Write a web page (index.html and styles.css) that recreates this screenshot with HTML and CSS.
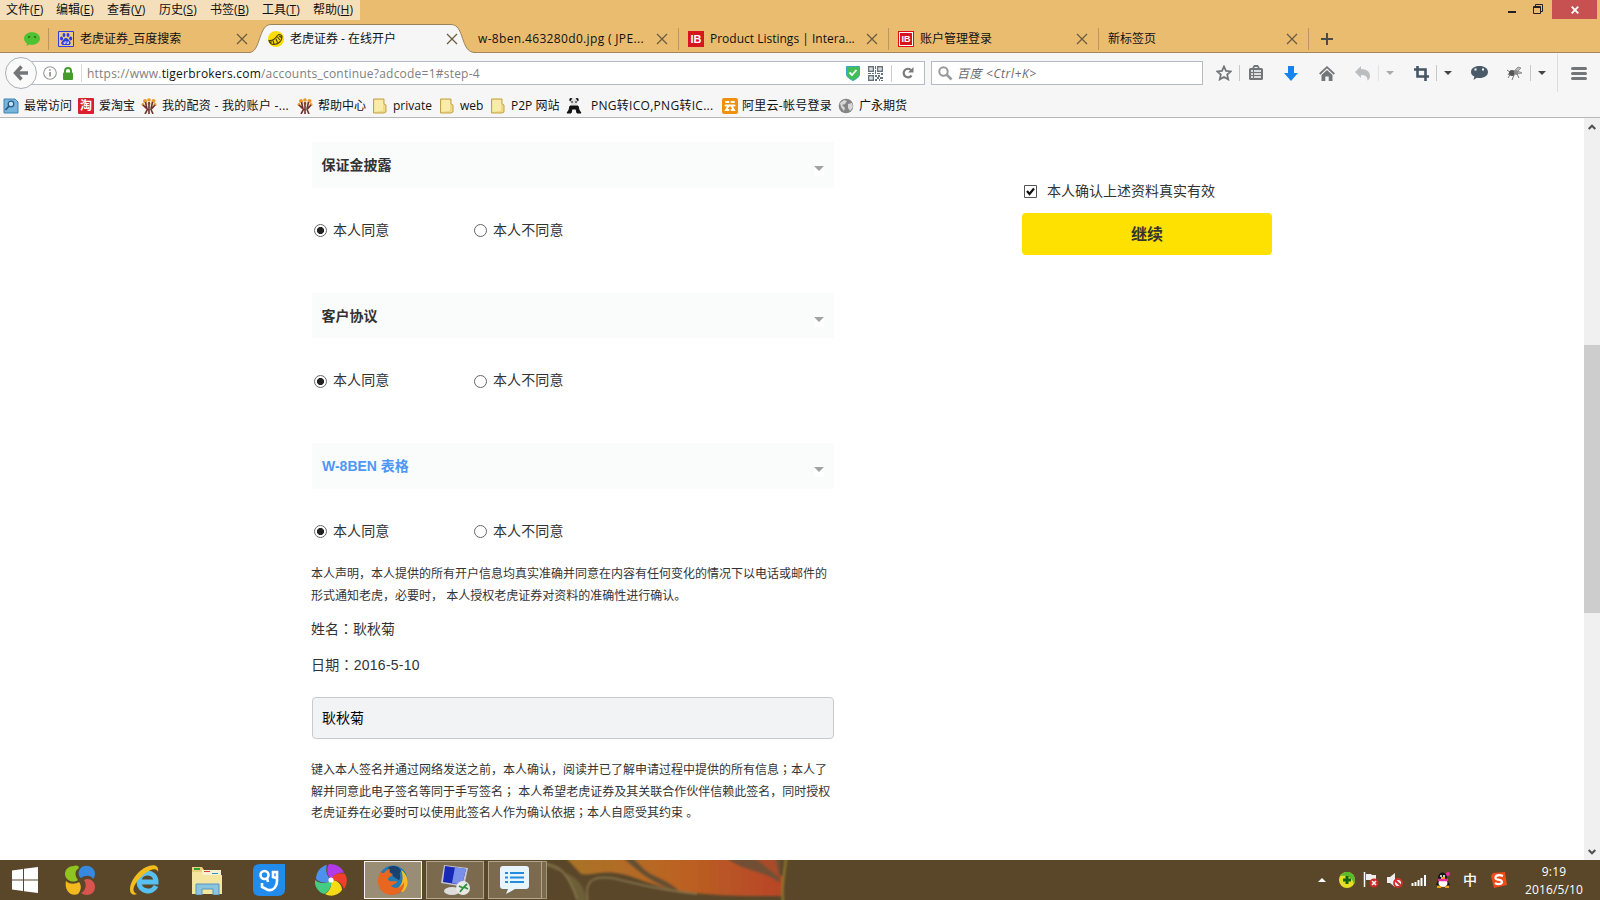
FILE: index.html
```html
<!DOCTYPE html>
<html lang="zh-CN">
<head>
<meta charset="utf-8">
<title>老虎证券 - 在线开户</title>
<link rel="stylesheet" href="styles.css">
</head>
<body>
<svg class="defs" width="0" height="0">
  <symbol id="x" viewBox="0 0 12 12"><path d="M1 1l10 10M11 1L1 11" stroke="#6b5c42" stroke-width="1.3" fill="none"/></symbol>
  <symbol id="folder" viewBox="0 0 16 16"><path d="M1.500 1h10.500v5l2 1v7l-2 1H1.500z" fill="#efd984" stroke="#c3a349"/><path d="M2.500 2H11v10.500L2.500 14z" fill="#f9eca9"/></symbol>
  <symbol id="tree" viewBox="0 0 16 16"><g fill="#e89a2c"><circle cx="4" cy="3" r="2"/><circle cx="8" cy="2" r="1.800"/><circle cx="12.500" cy="3" r="2"/><circle cx="2" cy="6.500" r="1.500"/><circle cx="14" cy="6.500" r="1.500"/><circle cx="8" cy="5.500" r="1.500"/></g><path d="M4 16l2.500-4.500L2 7M6 11L4.500 4M12 16l-2-4.500L14 7M10 11l1.500-7M8 4v12" stroke="#71302a" stroke-width="1.600" fill="none"/></symbol>
  <symbol id="caret" viewBox="0 0 8 4"><path d="M0 0h8L4 4z" fill="currentColor"/></symbol>
</svg>

<div class="window">
  <header class="titlebar">
    <nav class="menu">
      <span>文件(<u>F</u>)</span><span>编辑(<u>E</u>)</span><span>查看(<u>V</u>)</span><span>历史(<u>S</u>)</span><span>书签(<u>B</u>)</span><span>工具(<u>T</u>)</span><span>帮助(<u>H</u>)</span>
    </nav>
    <div class="controls">
      <svg class="min" width="8" height="2"><path d="M0 0h8v2H0z" fill="#222"/></svg>
      <svg class="restore" width="10" height="10" fill="none" stroke="#222"><path d="M2.500 2V.500h7v7H8"/><path d="M.500 2.500h7v7h-7zM0 3.500h8"/></svg>
      <span class="close"><svg width="8" height="8"><path d="M.700.700l6.600 6.600M7.300.700L.700 7.300" stroke="#fff" stroke-width="1.800"/></svg></span>
    </div>
  </header>

  <div class="tabs">
    <div class="pinned"><svg width="16" height="16" viewBox="0 0 16 16"><path d="M8 1.200c4.500 0 8 2.700 8 6.300s-3.500 6.300-8 6.300c-1 0-2-.1-2.800-.4L2.500 15l.5-2.600C1.200 11.200 0 9.500 0 7.500c0-3.600 3.500-6.300 8-6.300z" fill="#4fc234"/><circle cx="5" cy="6" r="1.100" fill="#2b6b1b"/><circle cx="11" cy="6" r="1.100" fill="#2b6b1b"/></svg></div>
    <div class="tab first">
      <svg class="fav" viewBox="0 0 16 16"><path d="M.500.500h15v15H.500z" fill="#ecc884" stroke="#2b3ce0"/><g fill="#2b3ce0"><ellipse cx="3.500" cy="7.500" rx="1.500" ry="2"/><ellipse cx="6" cy="4" rx="1.400" ry="2"/><ellipse cx="10" cy="4" rx="1.400" ry="2"/><ellipse cx="12.700" cy="7.500" rx="1.500" ry="2"/><path d="M8 7c2 0 2.500 2 4 3.500s.5 3.500-1.500 3.500h-5C3.500 14 2.500 12 4 10.500S6 7 8 7z"/></g><path d="M6 11v1.500h1.200V10M9 10.500v2h1.500v-2" stroke="#fff" stroke-width=".8" fill="none"/></svg>
      <span>老虎证券_百度搜索</span><svg class="x"><use href="#x"/></svg>
    </div>
    <div class="tab active">
      <svg class="shape" viewBox="0 0 228 30"><path d="M0 28.500C12 28.500 9 .500 22 .500H202c14 0 9 28 24 28v1.500H0z" fill="#f6f6f6"/><path d="M0 28.500C12 28.500 9 .500 22 .500H202c14 0 9 28 24 28" fill="none" stroke="#9a8259"/></svg>
      <svg class="fav" viewBox="0 0 16 16"><circle cx="8" cy="8" r="8" fill="#fbdc05"/><path d="M1 9.500c4 .5 6-1 8.500-5 1.500-1.700 4.500-1 4.500 1.500 0 4-4 7.500-8 7.500C3 13.500 1.500 12 1 9.500zM3 10v3M5 9.500l1 3.500M8 8l1.500 3.500M9.500 6l2.500 3M11 5l2.500 1.500" fill="none" stroke="#4a3c06" stroke-width="1.100"/></svg>
      <span>老虎证券 - 在线开户</span><svg class="x"><use href="#x"/></svg>
    </div>
    <div class="tab"><span class="latin">w-8ben.463280d0.jpg ( JPE...</span><svg class="x"><use href="#x"/></svg></div>
    <div class="tab"><span class="ib">IB</span><span>Product Listings | Intera...</span><svg class="x"><use href="#x"/></svg></div>
    <div class="tab"><span class="ib framed">IB</span><span>账户管理登录</span><svg class="x"><use href="#x"/></svg></div>
    <div class="tab"><span>新标签页</span><svg class="x"><use href="#x"/></svg></div>
    <svg class="plus" width="12" height="12"><path d="M6 0v12M0 6h12" stroke="#4b4b4b" stroke-width="2"/></svg>
  </div>

  <div class="toolbar">
    <span class="back"><svg width="16" height="16" viewBox="0 0 16 16"><path d="M8.500 1.500L2.500 8l6 6.500M3 8h12" fill="none" stroke="#737679" stroke-width="3.400"/></svg></span>
    <div class="url">
      <svg width="14" height="14" viewBox="0 0 14 14"><circle cx="7" cy="7" r="6.300" fill="none" stroke="#999" stroke-width="1.100"/><path d="M7 6v4.500M7 3.300v1.500" stroke="#888" stroke-width="1.600"/></svg>
      <svg class="lock" width="10" height="13" viewBox="0 0 10 13"><path d="M2 6V4a3 3 0 0 1 6 0v2" fill="none" stroke="#459b2c" stroke-width="2"/><rect y="5.500" width="10" height="7.500" rx="1" fill="#459b2c"/></svg>
      <span class="address">https://www.<b>tigerbrokers.com</b>/accounts_continue?adcode=1#step-4</span>
      <svg class="shield" width="14" height="15" viewBox="0 0 14 15"><path d="M.500.500h13V8c0 3-3 5-6.500 6.500C3.500 13 .500 11 .500 8z" fill="#43bd56" stroke="#38a6c4"/><path d="M3.500 6.500L6 9l4.500-5" fill="none" stroke="#fff" stroke-width="1.800"/></svg>
      <svg class="qr" width="15" height="15" viewBox="0 0 15 15"><path d="M.700.700h4.600v4.600H.700zM9.700.700h4.600v4.600H9.700zM.700 9.700h4.600v4.600H.700z" fill="none" stroke="#66717c" stroke-width="1.400"/><path d="M2.500 2.500h1v1h-1zM11.500 2.500h1v1h-1zM2.500 11.500h1v1h-1zM7 0h1v3H7zM7 4h1v4H7zM0 7h3v1H0zM4 7h2v1H4zM9 7h3v1H9zM13 7h2v2h-2zM7 9h2v2H7zM10 9h2v2h-2zM9 11h2v2H9zM12 11h3v2h-3zM7 13h2v2H7zM11 13h1v2h-1zM13 14h2v1h-2z" fill="#66717c"/></svg>
      <i class="vline"></i>
      <svg class="reload" width="12" height="12" viewBox="0 0 12 12"><path d="M9.500 8.500A4.300 4.300 0 1 1 9 3" fill="none" stroke="#7a7a7a" stroke-width="2.200"/><path d="M11.500 0v5.500H6z" fill="#7a7a7a"/></svg>
    </div>
    <div class="search"><svg width="15" height="15" viewBox="0 0 15 15"><circle cx="5.500" cy="5.500" r="4.200" fill="none" stroke="#999" stroke-width="2"/><path d="M8.700 8.700l4.800 4.800" stroke="#999" stroke-width="2.600"/></svg><em>百度 &lt;Ctrl+K&gt;</em></div>
    <div class="actions">
      <span class="a30"><svg width="16" height="16" viewBox="0 0 16 16"><path d="M8 1.500l2 4.400 4.700.5-3.500 3.200 1 4.800L8 12l-4.200 2.400 1-4.800L1.300 6.400 6 5.900z" fill="none" stroke="#737679" stroke-width="1.800"/></svg></span>
      <span class="a34 line"><svg width="16" height="16" viewBox="0 0 16 16"><rect x="1" y="3" width="14" height="12" rx="1.500" fill="#737679"/><path d="M5 3l1.500-2h3L11 3" fill="none" stroke="#737679" stroke-width="1.800"/><path d="M3 6h2M6 6h7M3 9h2M6 9h7M3 12h2M6 12h7" stroke="#fff" stroke-width="1.300"/></svg></span>
      <span class="a36"><svg width="14" height="15" viewBox="0 0 14 15"><path d="M4 0h6v7h4l-7 8-7-8h4z" fill="#1683ee"/></svg></span>
      <span class="a36"><svg width="16" height="15" viewBox="0 0 16 15"><path d="M.700 8L8 1.200 15.300 8" fill="none" stroke="#737679" stroke-width="1.800"/><path d="M8 4l5.500 5v6H9.700v-4.500H6.300V15H2.500V9z" fill="#737679"/></svg></span>
      <span class="a33"><svg width="16" height="15" viewBox="0 0 16 15"><path d="M6 0v3c6 0 9 3 9 7 0 2-1 3.500-2.500 4.500 0-4-2-5.500-6.500-5.500v3L0 6z" fill="#bbbec1"/></svg></span>
      <span class="a22 line light"><svg width="8" height="4"><use href="#caret"/></svg></span>
      <span class="a36 crop"><svg width="15" height="15" viewBox="0 0 15 15"><path d="M3.500 0v10.500H15M0 3.500h11.500V15" fill="none" stroke="#465463" stroke-width="2.600"/></svg></span>
      <span class="a22 line"><svg width="8" height="4"><use href="#caret"/></svg></span>
      <span class="a42"><svg width="17" height="14" viewBox="0 0 17 14"><path d="M8.500 0c5 0 8.500 2.500 8.500 6s-3.500 6-8.500 6c-1 0-2 0-2.700-.3L2.500 14l.8-3.500C1.300 9.500 0 8 0 6c0-3.500 3.500-6 8.500-6z" fill="#4a5a68"/><path d="M4.500 2.500v2M12 2.500v2" stroke="#fff" stroke-width="2"/></svg></span>
      <span class="a30"><svg width="16" height="14" viewBox="0 0 16 14"><path d="M6 6l5-5 3 1-3 3 4 2-5 1z" fill="#bbb" stroke="#777" stroke-width=".7"/><circle cx="5" cy="7" r="3" fill="#555"/><circle cx="9" cy="6.500" r="2.200" fill="#888"/><path d="M0 4l4 3-3 5M7 9l-2 5M10 8l2 4M3 6L1 9" fill="none" stroke="#555" stroke-width=".8"/></svg></span>
      <span class="a26 line"><svg width="8" height="4"><use href="#caret"/></svg></span>
      <span class="a43 tall"><svg width="16" height="13"><path d="M1.500 1.500h13M1.500 6.500h13M1.500 11.500h13" stroke="#737679" stroke-width="3" stroke-linecap="round"/></svg></span>
    </div>
  </div>

  <div class="bookmarks">
    <span><svg class="bi" viewBox="0 0 16 16"><path d="M1 1h11l3 3v11H1z" fill="#78b5dc" stroke="#3f84b5"/><circle cx="8" cy="6" r="2.800" fill="#c9e6f7" stroke="#245d8a" stroke-width="1.300"/><path d="M6 8l-3.500 4" stroke="#245d8a" stroke-width="1.800"/></svg>最常访问</span>
    <span><i class="bi red">淘</i>爱淘宝</span>
    <span class="spaced"><svg class="bi"><use href="#tree"/></svg>我的配资 - 我的账户 -...</span>
    <span><svg class="bi"><use href="#tree"/></svg>帮助中心</span>
    <span><svg class="bi"><use href="#folder"/></svg>private</span>
    <span><svg class="bi"><use href="#folder"/></svg>web</span>
    <span><svg class="bi"><use href="#folder"/></svg>P2P 网站</span>
    <span class="panda spaced"><svg class="bi" viewBox="0 0 16 16"><circle cx="5" cy="1.800" r="1.700"/><circle cx="11" cy="1.800" r="1.700"/><circle cx="8" cy="4" r="3.500" fill="#ddd"/><path d="M6 3v2M10 3v2M4 8h8l1 4 2 3h-4l-1-4H6l-1 4H1l2-3z" stroke="#111" fill="#111"/></svg>PNG转ICO,PNG转IC...</span>
    <span class="ali spaced"><svg class="bi" viewBox="0 0 16 16"><rect width="16" height="16" rx="2" fill="#f0910e"/><path d="M4 4h2.500M9.500 4H12M3.500 7.500h9M6.500 8L4 12h2.500M9.500 8l2.500 4H9.500" fill="none" stroke="#fff" stroke-width="1.900" stroke-linecap="round"/></svg>阿里云-帐号登录</span>
    <span><svg class="bi" viewBox="0 0 16 16"><circle cx="8" cy="8" r="7.300" fill="#858585"/><path d="M2 5l4-3 3 1-2 3-3 1 3 3-1 3-3-4zM10 6l4-1 1 4-3 4-2-3z" fill="#d7d7d7"/></svg>广永期货</span>
  </div>

  <div class="viewport">
    <main class="form">
      <section><h3>保证金披露<svg class="drop" width="10" height="10"><path d="M0 0h10v10H0z" fill="#fff"/><path d="M0 0h10L5 5z" fill="#a2a2a2"/></svg></h3>
        <div class="choices"><label><i class="radio on"></i>本人同意</label><label><i class="radio"></i>本人不同意</label></div></section>
      <section><h3>客户协议<svg class="drop" width="10" height="10"><path d="M0 0h10v10H0z" fill="#fff"/><path d="M0 0h10L5 5z" fill="#a2a2a2"/></svg></h3>
        <div class="choices"><label><i class="radio on"></i>本人同意</label><label><i class="radio"></i>本人不同意</label></div></section>
      <section class="last"><h3 class="blue">W-8BEN 表格<svg class="drop" width="10" height="10"><path d="M0 0h10v10H0z" fill="#fff"/><path d="M0 0h10L5 5z" fill="#a2a2a2"/></svg></h3>
        <div class="choices"><label><i class="radio on"></i>本人同意</label><label><i class="radio"></i>本人不同意</label></div></section>
      <p class="small">本人声明，本人提供的所有开户信息均真实准确并同意在内容有任何变化的情况下以电话或邮件的<br>形式通知老虎，必要时， 本人授权老虎证券对资料的准确性进行确认。</p>
      <p class="field">姓名<span class="mid" lang="zh-TW">：</span>耿秋菊</p>
      <p class="field date">日期<span class="mid" lang="zh-TW">：</span>2016-5-10</p>
      <div class="sign">耿秋菊</div>
      <p class="small">键入本人签名并通过网络发送之前，本人确认，阅读并已了解申请过程中提供的所有信息<span class="mid" lang="zh-TW">；</span>本人了<br>解并同意此电子签名等同于手写签名<span class="mid" lang="zh-TW">；</span> 本人希望老虎证券及其关联合作伙伴信赖此签名，同时授权<br>老虎证券在必要时可以使用此签名人作为确认依据<span class="mid" lang="zh-TW">；</span>本人自愿受其约束 。</p>
    </main>
    <aside class="confirm">
      <label><svg width="13" height="13"><path d="M.500.500h12v12H.500z" fill="#fff" stroke="#555"/><path d="M3 6l2.500 3L10 3.500" fill="none" stroke="#111" stroke-width="2.200"/></svg>本人确认上述资料真实有效</label>
      <div class="button">继续</div>
    </aside>
    <div class="scroll">
      <svg width="8" height="6"><path d="M.700 5L4 1.700 7.300 5" fill="none" stroke="#505050" stroke-width="2"/></svg>
      <i></i>
      <svg width="8" height="6"><path d="M.700 1L4 4.300 7.300 1" fill="none" stroke="#505050" stroke-width="2"/></svg>
    </div>
  </div>

  <footer class="taskbar">
    <svg class="art" width="310" height="40" viewBox="0 0 310 40">
      <defs><linearGradient id="leaf"><stop offset="0" stop-color="#a87426"/><stop offset=".5" stop-color="#bb6424"/><stop offset="1" stop-color="#b84426"/></linearGradient><filter id="soft"><feGaussianBlur stdDeviation="1"/></filter></defs>
      <g filter="url(#soft)">
        <path d="M25 -3H195c15 12 30 15 50 20l-4 19h-28c-20 0-42-1-66-4C110 27 95 15 75 13 60 11 50 16 41 14z" fill="url(#leaf)"/>
        <path d="M82 -3c18 16 30 27 58 35-10-12-25-14-35-22L92 -3z" fill="#655030"/>
        <path d="M185 -3h55v26c-18-14-38-11-55-26z" fill="#715034"/>
        <path d="M215 -2l25 20-5-20z" fill="#a84b2b"/>
        <path d="M0 4c19 0 30 10 38 40h8c0-14-5-22-16-29" fill="#6d6039"/>
        <path d="M0 3c19 1 27 8 37 36M48 42c-5-24 8-26 24-24 22 5 44 12 85 16" fill="none" stroke="#8b7a50" stroke-width="1.500"/>
        <path d="M246 -2c-1 12-5 26-3 44" fill="none" stroke="#8b742c" stroke-width="2.500"/>
      </g>
    </svg>
    <svg class="win" width="26" height="26" viewBox="0 0 26 26"><path d="M0 3.500L11 2v10.500H0zM12 1.800L26 0v12.500H12zM0 13.500h11V24L0 22.500zM12 13.500h14V26l-14-1.800z" fill="#fff"/></svg>
    <span class="app bean"><svg width="30" height="30" viewBox="0 0 30 30"><path d="M9 1c3-1 5 0 5 2-5 3-4 8-1 12-5 4-13 0-13-6C0 4 4 1 9 1z" fill="#8fc51e"/><path d="M15 4c4-6 15-3 15 5 0 2-1 4-2 5-2-4-8-4-12-1-3-2-3-6-1-9z" fill="#3689df"/><path d="M1 16c4 4 10 3 13 1 3 4 2 9-1 12C6 32-1 26 1 16z" fill="#f3b91f"/><path d="M19 15c5-3 11 1 11 7 0 8-9 10-14 6 5-2 6-9 3-13z" fill="#d9544d"/></svg></span>
    <span class="app ie"><svg width="30" height="30" viewBox="0 0 30 30"><path d="M26 21c-4 8-17 6-17-4 0-12 17-12 17 0H10" fill="none" stroke="#58c0f0" stroke-width="5"/><path d="M7 29C-3 33-2 18 8 8 17-1 30-3 28 7c-1-5-9-3-17 5-8 8-10 15-4 17z" fill="#f2bd1d"/></svg></span>
    <span class="app"><svg width="32" height="30" viewBox="0 0 32 30"><path d="M1 2h10l2 3h17v24H1z" fill="#e9d27b"/><path d="M11 5h19v5H11z" fill="#f7f1d2"/><path d="M3 3h6v2H3z" fill="#27a43f"/><path d="M13 6h6v1h-6z" fill="#d1482f"/><path d="M21 8h6v1h-6z" fill="#2e91d1"/><path d="M1 7h9l2 3h19v19H1z" fill="#f4e5a1"/><path d="M5 30V19h23v11h-6v-6H11v6z" fill="#8ac4df" stroke="#5499bd"/></svg></span>
    <span class="app"><svg width="32" height="32" viewBox="0 0 32 32"><path d="M7 0h25v25q0 7-7 7H7q-7 0-7-7V7q0-7 7-7z" fill="#228cec"/><circle cx="11.500" cy="11" r="4" fill="none" stroke="#fff" stroke-width="2.600"/><path d="M14 14l1 4M9 19v4l6 3c6 1 9-4 9-9V8h-4v5l3 1" fill="none" stroke="#fff" stroke-width="2.600"/></svg></span>
    <span class="app"><svg width="32" height="32" viewBox="0 0 32 32"><path d="M16 16C12 11 11 5 14 0c7 0 13 3 15 9-5-1-10 1-13 7z" fill="#b13bea"/><path d="M16 16c2-6 8-8 14-6 3 5 2 11-1 15-2-6-6-9-13-9z" fill="#f0402c"/><path d="M16 16c6 0 11 4 11 10-4 6-12 7-17 4 5-3 7-8 6-14z" fill="#f6dc17"/><path d="M16 16c1 7-2 12-7 14C3 28-1 22 0 16c5 4 11 4 16 0z" fill="#43cc82"/><path d="M16 16c-5 4-11 3-15-1C1 8 6 2 12 1c-2 6 0 11 4 15z" fill="#4c91ee"/><circle cx="16" cy="16" r="2.600" fill="#fff"/></svg></span>
    <span class="task current"><svg width="30" height="30" viewBox="0 0 30 30"><circle cx="15" cy="15" r="14.500" fill="#247ab1"/><path d="M10 3c5-4 12-1 13 3-3 3 1 6-2 9-4-2-8-5-11-12z" fill="#1b416e"/><path d="M23 5c8 5 9 16 2 22l-8-2c8-4 9-12 6-20z" fill="#f6ba28"/><path d="M3 6c0 2 1 2 3 2 2-3 4-4 6-4-1 3-1 4 3 5-3 4-5 3-5 5 2 5 8 0 9 3-2 3-5 2-6 4 5 4 11 1 13-4 1 8-5 13-12 13C1 30-4 17 3 6z" fill="#e86620"/></svg></span>
    <span class="task"><svg width="30" height="30" viewBox="0 0 30 30"><ellipse cx="12" cy="26" rx="8" ry="4" fill="#ddd"/><path d="M4 0l24 3-4 19L1 18z" fill="#c4c5d0"/><path d="M5 1l21 3-4 16L3 17z" fill="#1728b5"/><path d="M15 2l11 2-4 16-10-2z" fill="#798fe9"/><circle cx="23" cy="23" r="7" fill="#e8e8e5"/><path d="M19 21l4 2-3 4M27 19l-3 3 4 2" fill="none" stroke="#31923f" stroke-width="1.800"/></svg></span>
    <span class="task chat"><svg width="30" height="28" viewBox="0 0 30 28"><path d="M3 0h23q3 0 3 3v17q0 3-3 3H15l-9 5 2-5H3q-3 0-3-3V3q0-3 3-3z" fill="#e6f5ff"/><path d="M5 7h3M10 7h14M5 11.500h3M10 11.500h14M5 16h3M10 16h14" stroke="#258bdc" stroke-width="2"/></svg></span>
    <i class="stack"></i>
    <div class="tray">
      <svg class="up" width="8" height="4"><path d="M0 4h8L4 0z" fill="#fff"/></svg>
      <svg width="16" height="16" viewBox="0 0 16 16"><circle cx="8" cy="8" r="8" fill="#e7df25"/><path d="M1 4a8 8 0 0 1 14 8C13 5 8 3 1 4z" fill="#58ba2d"/><path d="M8 4v8M4 8h8" stroke="#136319" stroke-width="3"/></svg>
      <svg width="16" height="16" viewBox="0 0 16 16"><path d="M1.500 0v15" stroke="#fff" stroke-width="1.500"/><path d="M3 2h5l1 1h4v6H8L7 8H3z" fill="#eee"/><circle cx="11" cy="11" r="4.600" fill="#cf2929"/><path d="M9 9l4 4M13 9l-4 4" stroke="#fff" stroke-width="1.500"/></svg>
      <svg width="16" height="16" viewBox="0 0 16 16"><path d="M0 5h3l5-4v14l-5-4H0z" fill="#eee"/><circle cx="11" cy="11" r="4" fill="#eee" stroke="#d02d2d" stroke-width="1.800"/><path d="M8 8l6 6" stroke="#d02d2d" stroke-width="2"/></svg>
      <svg width="16" height="16" viewBox="0 0 16 16"><path d="M1.500 11v3M4.500 10v4M7.500 8v6M10.500 6v8M14 3v11" stroke="#fff" stroke-width="2"/></svg>
      <svg width="16" height="16" viewBox="0 0 16 16"><path d="M3 8C2-2 13-2 12 8l3 5H1z" fill="#161616"/><ellipse cx="8" cy="11" rx="4.500" ry="4" fill="#fff"/><path d="M3 8h10" stroke="#ed2aa0" stroke-width="2.500"/><path d="M6 3v2M9 3v2" stroke="#fff" stroke-width="1.500"/><path d="M6 6h4M2 15h4M10 15h4" stroke="#f29c19" stroke-width="2"/><circle cx="13" cy="2" r="2" fill="#ed2aa0"/></svg>
      <span class="ime">中</span>
      <svg width="16" height="16" viewBox="0 0 16 16"><path d="M2 1l12-1 2 13-13 3L0 4z" fill="#ee4b17"/><path d="M12 4c-5-2-9 0-7 3 1 1 6 0 6 3 0 2-4 3-7 1" fill="none" stroke="#fff" stroke-width="2.200"/></svg>
      <div class="clock"><span>9:19</span><span>2016/5/10</span></div>
    </div>
  </footer>
</div>
</body>
</html>
```

FILE: styles.css
```css
* { box-sizing: border-box; }
body { margin: 0; overflow: hidden; font: 12px/18px "Open Sans", "Noto Sans CJK SC", sans-serif; color: #111; }
svg { display: block; flex: none; }
i { font-style: normal; }
.defs { position: absolute; }
.window { width: 1600px; height: 900px; display: flex; flex-direction: column; background: #fff; }

.titlebar { height: 20px; flex: none; background: #eabc70; display: flex; justify-content: space-between; }
.menu { width: 360px; height: 20px; display: grid; grid-template-columns: 50px 51px 52px 51px 52px 51px 1fr; padding-left: 6px; background: #f4dfba; line-height: 20px; white-space: nowrap; }
.controls { display: flex; align-items: flex-start; }
.min { margin: 11px 17px 0 0; }
.restore { margin: 4px 9px 0 0; }
.close { width: 45px; height: 19px; margin-right: 3px; background: #c75050; display: flex; justify-content: center; align-items: center; }

.tabs { height: 33px; flex: none; background: #eabc70; border-bottom: 1px solid #a3875a; display: flex; }
.pinned { width: 49px; padding: 11px 0 0 24px; height: 30px; position: relative; }
.pinned::after { content: ""; position: absolute; right: 0; top: 8px; width: 1px; height: 22px; background: #b9975f; }
.tab { width: 210px; flex: none; height: 30px; padding: 8px 10px 0; display: flex; align-items: center; position: relative; white-space: nowrap; }
.tab::after { content: ""; position: absolute; right: -1px; top: 8px; width: 1px; height: 22px; background: #b9975f; }
.tab.first { width: 209px; padding-left: 9px; }
.tab.first::after, .tab.active::after { display: none; }
.tab .x { width: 12px; height: 12px; margin-left: auto; }
.fav { width: 16px; height: 16px; margin-right: 6px; }
.shape { position: absolute; left: -9px; top: 4px; width: 228px; height: 30px; z-index: 1; }
.tab.active .fav, .tab.active span, .tab.active .x { position: relative; z-index: 2; }
.latin { letter-spacing: .34px; }
.ib { width: 16px; height: 16px; background: #d7151c; color: #fff; font: bold 11px/16px "Liberation Sans", sans-serif; text-align: center; margin-right: 6px; }
.framed { border: 1px solid #e20a12; box-shadow: inset 0 0 0 1px #fff; font-size: 9px; line-height: 14px; }
.plus { margin: 13px 0 0 13px; }

.toolbar { height: 40px; flex: none; background: #f6f6f6; display: flex; align-items: center; }
.back { width: 32px; height: 32px; margin-left: 5px; border: 1px solid #aab0b8; border-radius: 50%; background: #fafafa; display: flex; flex: none; align-items: center; justify-content: center; z-index: 1; }
.url { width: 904px; height: 24px; flex: none; margin-left: -16px; padding-left: 21px; background: #fff; border: 1px solid #b5bbc6; display: flex; align-items: center; }
.lock { margin: 0 8px 0 6px; }
.address { color: #808080; border-left: 1px solid #d9d9d9; padding-left: 5px; height: 18px; line-height: 19px; letter-spacing: .22px; }
.address b { color: #111; font-weight: 400; }
.shield { margin-left: auto; }
.qr { margin: 0 8px; }
.vline { width: 1px; height: 17px; background: #ccc; }
.reload { margin: 0 10px 0 10px; }
.search { width: 272px; height: 24px; flex: none; margin-left: 6px; padding-left: 6px; background: #fff; border: 1px solid #b5bbc6; display: flex; align-items: center; gap: 4px; color: #6b6b6b; line-height: 19px; }
.search em { letter-spacing: .6px; }
.actions { display: flex; flex: none; margin-left: 6px; height: 40px; align-items: center; }
.actions span { display: flex; flex: none; height: 16px; align-items: center; justify-content: center; color: #444; }
.actions .line { border-left: 1px solid #c8c8c8; }
.actions .light { color: #aaa; border-color: #e3e3e3; }
.actions .tall { height: 38px; border-left: 1px solid #ddd; }
.a30 { width: 30px; }
.a33 { width: 33px; padding-left: 3px; }
.a34 { width: 34px; padding-right: 2px; }
.a36 { width: 36px; }
.crop { padding-left: 6px; }
.a22 { width: 22px; }
.a42 { width: 42px; }
.a26 { width: 27px; padding-right: 5px; }
.a43 { width: 43px; }

.bookmarks { height: 25px; flex: none; background: #f6f6f6; border-bottom: 1px solid #b8b8b8; padding: 0 0 0 3px; display: grid; grid-template-rows: 26px; grid-template-columns: 75px 63px 156px 75px 67px 51px 76px 156px 116px 90px; }
.bookmarks span { display: flex; align-items: center; white-space: nowrap; }
.bookmarks .spaced { letter-spacing: .28px; }
.bi { width: 16px; height: 16px; margin-right: 5px; flex: none; }
.red { background: #dc1f2d; color: #fff; font-weight: 700; line-height: 15px; text-align: center; border-radius: 1px; }
.panda .bi { margin-right: 9px; }
.ali .bi { margin-right: 4px; }

.viewport { height: 742px; flex: none; display: flex; background: #fff; font-family: "Liberation Sans", "Noto Sans CJK SC", sans-serif; color: #333; }
.form { width: 522px; margin-left: 312px; padding-top: 24px; }
section { height: 150.5px; }
section.last { height: 121px; }
h3 { margin: 0; height: 45.5px; background: #fafcfb; padding: 0 10px 0 9.5px; font-size: 14px; line-height: 46px; display: flex; }
h3.blue { color: #4f97f6; padding-left: 10px; }
.drop { margin: 24px 0 0 auto; }
.choices { display: flex; margin-top: 32px; font-size: 14px; line-height: 20px; letter-spacing: .1px; }
.choices label { width: 160px; display: flex; align-items: center; padding-left: 2px; white-space: nowrap; }
.radio { width: 13px; height: 13px; border: 1px solid #666; border-radius: 50%; margin: 2px 6px 0 0; }
.radio.on { background: radial-gradient(circle, #222 3.200px, #fff 3.900px); }
p { margin: 0; white-space: nowrap; }
.small { font-size: 12px; line-height: 21.6px; margin-left: -1px; }
.mid { font-family: "Noto Sans CJK TC", sans-serif; line-height: 1px; }
.field { font-size: 14px; line-height: 20px; height: 20px; margin: 12px 0 0 -1px; }
.date { margin-top: 16px; letter-spacing: .25px; }
.sign { height: 42px; margin: 22px 0 21px; border: 1px solid #c8cacc; border-radius: 4px; background: #f2f3f5; padding-left: 9px; color: #000; font-size: 14px; line-height: 40px; }
.confirm { width: 250px; margin-left: 188px; padding-top: 63px; }
.confirm label { display: flex; align-items: center; gap: 10px; height: 20px; padding-left: 2px; font-size: 14px; white-space: nowrap; }
.button { margin-top: 12px; height: 42px; background: #ffe100; border-radius: 4px; text-align: center; font-weight: 700; font-size: 16px; line-height: 43px; }
.scroll { width: 16px; margin-left: auto; background: #f0f0f0; display: flex; flex-direction: column; align-items: center; padding: 6px 0 5px; }
.scroll i { width: 16px; height: 268px; margin: 215px 0 auto; background: #cdcdcd; }

.taskbar { height: 40px; flex: none; background: #5a472a; display: flex; align-items: center; position: relative; }
.art { position: absolute; left: 540px; top: 0; }
.win { margin: 0 23px 0 12px; }
.app { width: 62px; display: flex; justify-content: center; }
.app.bean { width: 38px; margin-right: 15px; }
.app.ie { padding-left: 16px; justify-content: flex-start; }
.task { width: 58px; height: 38px; margin-right: 4px; background: #7b6a4e; border: 1px solid #b2a68f; display: flex; align-items: center; justify-content: center; position: relative; }
.current { background: #9a8d76; border-color: #f5f3ee; margin-left: 2px; }
.task.chat { width: 54px; margin-right: 0; }
.stack { width: 5px; height: 38px; border: 1px solid #a29679; border-left: 0; background: #7b6a4e; position: relative; }
.tray { display: flex; align-items: center; margin-left: auto; gap: 8px; color: #fff; height: 40px; }
.up { margin-right: 5px; }
.ime { width: 16px; margin: 0 5px 0 3px; font-size: 14px; text-align: center; font-weight: 500; }
.clock { width: 78px; margin: 0 7px 0 0; padding: 2px 0 0 0; display: flex; flex-direction: column; text-align: center; line-height: 18px; letter-spacing: .15px; }
```
